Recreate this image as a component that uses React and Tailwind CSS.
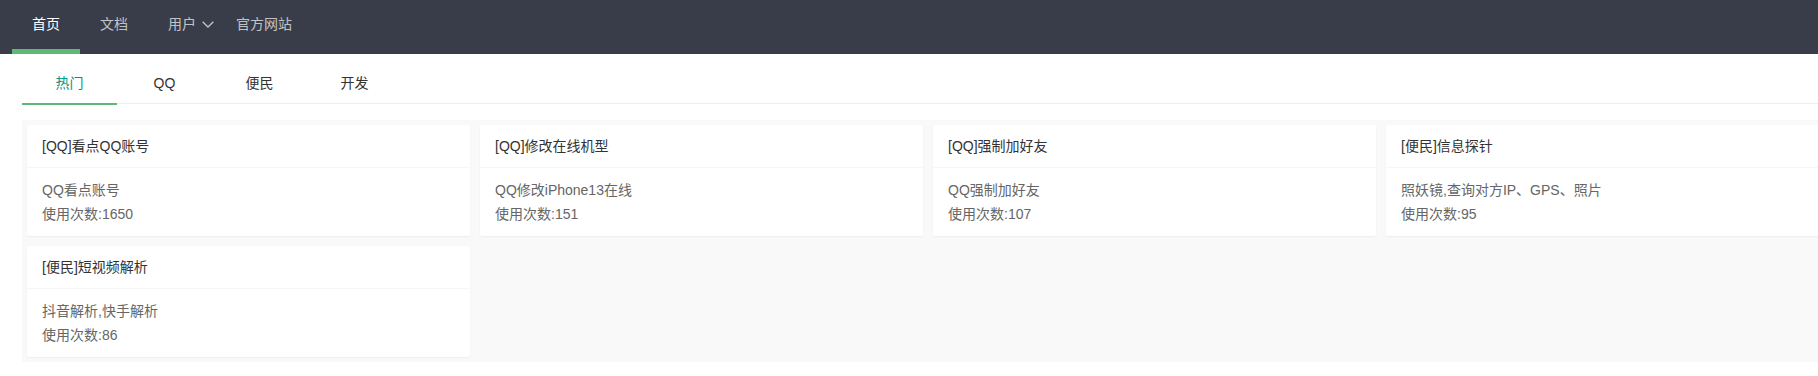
import React from 'react';

const font = { fontFamily: '"Liberation Sans", Arial, "Noto Sans CJK SC", sans-serif' };

const navItems = [
  { label: '首页', active: true },
  { label: '文档' },
  { label: '用户', more: true },
  { label: '官方网站' },
];

const tabs = ['热门', 'QQ', '便民', '开发'];

const tools = [
  { title: '[QQ]看点QQ账号', desc: 'QQ看点账号', count: 1650 },
  { title: '[QQ]修改在线机型', desc: 'QQ修改iPhone13在线', count: 151 },
  { title: '[QQ]强制加好友', desc: 'QQ强制加好友', count: 107 },
  { title: '[便民]信息探针', desc: '照妖镜,查询对方IP、GPS、照片', count: 95 },
  { title: '[便民]短视频解析', desc: '抖音解析,快手解析', count: 86 },
];

const Chevron = () => (
  <svg width="12" height="7" viewBox="0 0 12 7" fill="none" className="ml-[6px] mr-[2px]">
    <polyline points="0.7,0.7 6,6 11.3,0.7" stroke="rgba(255,255,255,0.7)" strokeWidth="1.3" />
  </svg>
);

const Header = () => (
  <div className="h-[54px] bg-[#393D49] flex pl-[12px]">
    {navItems.map(item => (
      <div
        key={item.label}
        className={`relative flex items-center pb-[6px] text-[14px] ${item.more ? 'pl-5' : 'px-5'} ${item.active ? 'text-white' : 'text-[rgba(255,255,255,0.7)]'}`}
      >
        {item.label}
        {item.more && <Chevron />}
        {item.active && <span className="absolute left-0 right-0 bottom-0 h-[5px] bg-[#5FB878]" />}
      </div>
    ))}
  </div>
);

const Tabs = () => (
  <div className="mt-[10px] ml-[22px] h-[40px] border-b border-[#eeeeee] flex">
    {tabs.map((t, idx) => (
      <div
        key={t}
        className={`relative w-[95px] h-[39px] flex items-center justify-center text-[14px] ${idx === 0 ? 'text-[#009688]' : 'text-[#333]'}`}
      >
        {t}
        {idx === 0 && <span className="absolute left-0 right-0 bottom-[-2px] h-[2px] bg-[#5FB878]" />}
      </div>
    ))}
  </div>
);

const Card = ({ tool }) => (
  <div className="p-[5px]">
    <div className="bg-white rounded-[2px] shadow-[0_1px_2px_0_rgba(0,0,0,0.05)]">
      <div className="h-[43px] leading-[42px] px-[15px] border-b border-[#f6f6f6] text-[14px] text-[#333]">
        {tool.title}
      </div>
      <div className="px-[15px] py-[10px] text-[14px] leading-[24px] text-[#666]">
        <div>{tool.desc}</div>
        <div>使用次数:{tool.count}</div>
      </div>
    </div>
  </div>
);

export default function App() {
  return (
    <div className="w-[1818px] h-[376px] overflow-hidden bg-white" style={font}>
      <Header />
      <Tabs />
      <div className="mt-[16px] ml-[22px] w-[1812px] bg-[#f9f9f9]">
        <div className="grid grid-cols-4">
          {tools.map(tool => (
            <Card key={tool.title} tool={tool} />
          ))}
        </div>
      </div>
    </div>
  );
}
